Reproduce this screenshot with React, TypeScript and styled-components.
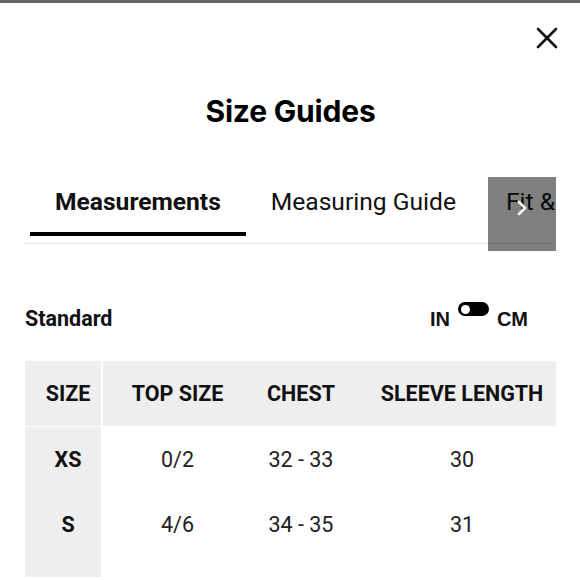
import React, { useState } from 'react'
import styled, { createGlobalStyle } from 'styled-components'

const GlobalStyle = createGlobalStyle`
  html, body {
    margin: 0;
    padding: 0;
    background: #fff;
    overflow: hidden;
  }
  body {
    font-family: Roboto, 'Liberation Sans', sans-serif;
    color: #111;
  }
`

const tabs = ['Measurements', 'Measuring Guide', 'Fit & Sizing']

const rows = [
  { size: 'XS', top: '0/2', chest: '32 - 33', sleeve: '30' },
  { size: 'S', top: '4/6', chest: '34 - 35', sleeve: '31' },
  { size: 'M', top: '8/10', chest: '36 - 37', sleeve: '32' },
]

const App: React.FC = () => {
  const [active, setActive] = useState(0)
  const [metric, setMetric] = useState(false)

  return (
    <>
      <GlobalStyle />
      <StyledSheet>
        <StyledTopBar>
          <StyledClose aria-label="Close">
            <svg width="22" height="22" viewBox="0 0 22 22">
              <path d="M2 2 L20 20 M20 2 L2 20" stroke="#111" strokeWidth="2.6" strokeLinecap="round" />
            </svg>
          </StyledClose>
        </StyledTopBar>

        <StyledTitle>Size Guides</StyledTitle>

        <StyledTabBar>
          <StyledTabScroller>
            {tabs.map((t, i) => (
              <StyledTab key={t} active={i === active} onClick={() => setActive(i)}>
                {t}
              </StyledTab>
            ))}
          </StyledTabScroller>
          <StyledScrollButton aria-label="Next">
            <svg width="14" height="18" viewBox="0 0 14 18">
              <path d="M4 3 L10 9 L4 15" stroke="#fff" strokeWidth="2.6" fill="none" strokeLinecap="round" />
            </svg>
          </StyledScrollButton>
        </StyledTabBar>

        <StyledUnitRow>
          <StyledUnitLabel>Standard</StyledUnitLabel>
          <StyledUnitSwitch>
            <StyledUnit>IN</StyledUnit>
            <StyledToggle on={metric} onClick={() => setMetric(!metric)}>
              <StyledKnob on={metric} />
            </StyledToggle>
            <StyledUnit>CM</StyledUnit>
          </StyledUnitSwitch>
        </StyledUnitRow>

        <StyledTable>
          <StyledHeadCell first>SIZE</StyledHeadCell>
          <StyledHeadCell>TOP SIZE</StyledHeadCell>
          <StyledHeadCell>CHEST</StyledHeadCell>
          <StyledHeadCell last>SLEEVE LENGTH</StyledHeadCell>
          {rows.map((r) => (
            <React.Fragment key={r.size}>
              <StyledSizeCell>{r.size}</StyledSizeCell>
              <StyledCell>{r.top}</StyledCell>
              <StyledCell>{r.chest}</StyledCell>
              <StyledCell last>{r.sleeve}</StyledCell>
            </React.Fragment>
          ))}
        </StyledTable>
      </StyledSheet>
    </>
  )
}

const StyledSheet = styled.div`
  border-top: 3px solid #666;
  padding: 0 24px 0 25px;
  height: 577px;
  overflow: hidden;
  box-sizing: border-box;
`

const StyledTopBar = styled.div`
  display: flex;
  justify-content: flex-end;
  padding-top: 24px;
  height: 28px;
`

const StyledClose = styled.button`
  border: 0;
  background: none;
  padding: 0;
  width: 22px;
  height: 22px;
  margin-right: -2px;
  cursor: pointer;
`

const StyledTitle = styled.h1`
  margin: 38px 0 0;
  text-align: center;
  font-family: Inter, 'Open Sans', sans-serif;
  font-weight: 700;
  font-size: 30px;
  line-height: 36px;
  letter-spacing: -0.2px;
  color: #000;
`

const StyledTabBar = styled.div`
  position: relative;
  margin-top: 48px;
`

const StyledTabScroller = styled.div`
  display: flex;
  padding-left: 5px;
  height: 66px;
  white-space: nowrap;
  overflow: hidden;
  border-bottom: 1px solid #e6e6e6;
`

const StyledTab = styled.div<{ active?: boolean }>`
  flex: none;
  padding: 10px 25px 0;
  height: 45px;
  font-size: 24.6px;
  line-height: 30px;
  font-weight: ${(p) => (p.active ? 700 : 400)};
  color: #111;
  border-bottom: 4px solid ${(p) => (p.active ? '#000' : 'transparent')};
  cursor: pointer;
`

const StyledScrollButton = styled.button`
  position: absolute;
  top: 0;
  right: 0;
  width: 68px;
  height: 74px;
  border: 0;
  padding: 0 0 12px 0;
  background: rgba(0, 0, 0, 0.5);
  display: flex;
  align-items: center;
  justify-content: center;
`

const StyledUnitRow = styled.div`
  display: flex;
  align-items: baseline;
  justify-content: space-between;
  margin-top: 58px;
  padding-right: 28px;
`

const StyledUnitLabel = styled.div`
  font-size: 21.5px;
  font-weight: 700;
  line-height: 24px;
`

const StyledUnitSwitch = styled.div`
  display: flex;
  align-items: flex-start;
  gap: 8px;
`

const StyledUnit = styled.span`
  font-family: 'Liberation Sans', Arial, sans-serif;
  font-weight: 700;
  font-size: 20px;
  line-height: 20px;
  padding-top: 7px;
`

const StyledToggle = styled.div<{ on: boolean }>`
  position: relative;
  width: 31px;
  height: 14px;
  border-radius: 7px;
  background: #000;
  cursor: pointer;
`

const StyledKnob = styled.span<{ on: boolean }>`
  position: absolute;
  top: 2.5px;
  left: ${(p) => (p.on ? '19px' : '3px')};
  width: 9px;
  height: 9px;
  border-radius: 50%;
  background: #fff;
`

const StyledTable = styled.div`
  display: grid;
  grid-template-columns: 78px 149px 98px 1fr;
  grid-template-rows: 66px;
  grid-auto-rows: 65px;
  margin-top: 30px;
`

const StyledHeadCell = styled.div<{ first?: boolean; last?: boolean }>`
  display: flex;
  align-items: center;
  justify-content: center;
  box-sizing: border-box;
  background: #eeeeee;
  font-size: 21.5px;
  font-weight: 700;
  color: #111;
  border-bottom: 1px solid #fff;
  border-right: ${(p) => (p.first ? '2px solid #fff' : '0')};
  padding-left: ${(p) => (p.first ? '10px' : p.last ? '18px' : '0')};
  white-space: nowrap;
`

const StyledSizeCell = styled.div`
  display: flex;
  align-items: center;
  justify-content: center;
  box-sizing: border-box;
  background: #eeeeee;
  border-right: 2px solid #fff;
  padding-left: 10px;
  font-size: 21.5px;
  font-weight: 700;
  color: #111;
`

const StyledCell = styled.div<{ last?: boolean }>`
  display: flex;
  align-items: center;
  justify-content: center;
  padding-left: ${(p) => (p.last ? '18px' : '0')};
  font-size: 21.5px;
  color: #222;
`

export default App
